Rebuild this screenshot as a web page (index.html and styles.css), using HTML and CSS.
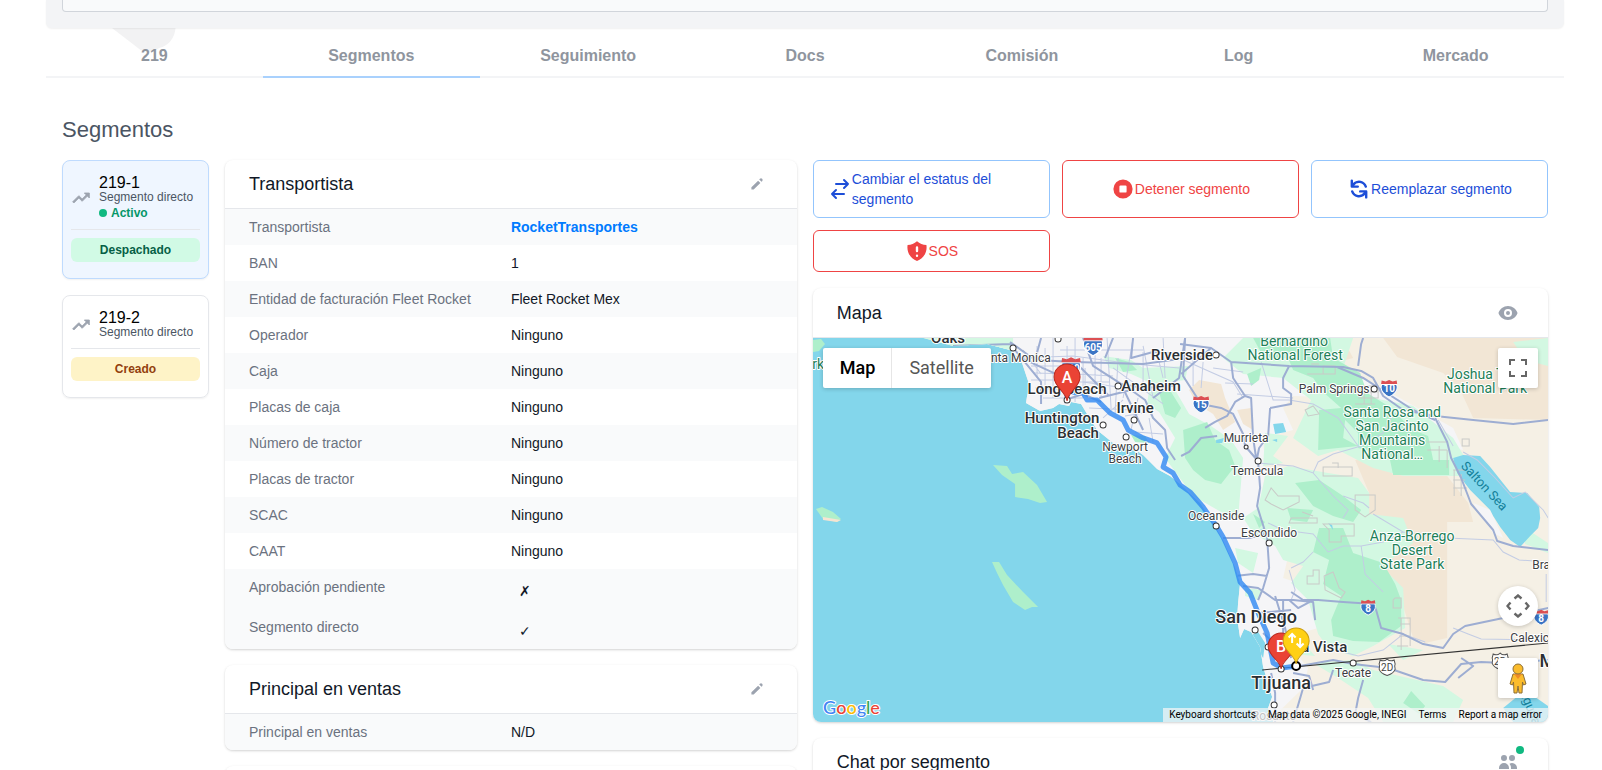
FILE: index.html
```html
<!DOCTYPE html>
<html lang="es">
<head>
<meta charset="utf-8">
<meta name="viewport" content="width=device-width, initial-scale=1">
<title>Segmentos</title>
<link rel="stylesheet" href="styles.css">
</head>
<body>
<div class="page">
  <div class="summary"><div class="summary-inner"></div></div>

  <nav class="tabs" aria-label="Secciones">
    <svg class="tabs-tail" viewBox="0 0 64 25" aria-hidden="true"><path d="M0 0H63.500C63 9 57 18 47 20C41 25 31 25 26 20Z"/></svg>
    <button class="tab" type="button">219</button>
    <button class="tab tab-active" type="button">Segmentos</button>
    <button class="tab" type="button">Seguimiento</button>
    <button class="tab" type="button">Docs</button>
    <button class="tab" type="button">Comisión</button>
    <button class="tab" type="button">Log</button>
    <button class="tab" type="button">Mercado</button>
  </nav>

  <main class="content">
    <h1 class="title">Segmentos</h1>
    <div class="columns">
      <aside class="segments">
        <button class="segment segment-selected" type="button">
          <span class="segment-head">
            <svg class="icon-20 icon-trend" viewBox="0 0 24 24" aria-hidden="true"><path d="M16 6l2.290 2.290-4.880 4.880-4-4L2 16.590 3.410 18l6-6 4 4 6.300-6.290L22 12V6z"/></svg>
            <span class="segment-text">
              <span class="segment-id">219-1</span>
              <span class="segment-kind">Segmento directo</span>
              <span class="segment-live"><span class="dot"></span>Activo</span>
            </span>
          </span>
          <span class="badge badge-green">Despachado</span>
        </button>
        <button class="segment" type="button">
          <span class="segment-head">
            <svg class="icon-20 icon-trend" viewBox="0 0 24 24" aria-hidden="true"><path d="M16 6l2.290 2.290-4.880 4.880-4-4L2 16.590 3.410 18l6-6 4 4 6.300-6.290L22 12V6z"/></svg>
            <span class="segment-text">
              <span class="segment-id">219-2</span>
              <span class="segment-kind">Segmento directo</span>
            </span>
          </span>
          <span class="badge badge-yellow">Creado</span>
        </button>
      </aside>

      <div class="stack">
        <section class="card">
          <header class="card-head">
            <h2>Transportista</h2>
            <button class="icon-button" type="button" aria-label="Editar transportista"><svg class="icon-16" viewBox="0 0 20 20"><path d="M13.586 3.586a2 2 0 112.828 2.828l-.793.793-2.828-2.828.793-.793zM11.379 5.793L3 14.172V17h2.828l8.380-8.379-2.830-2.828z"/></svg></button>
          </header>
          <table class="facts">
            <tr><th scope="row">Transportista</th><td><a href="#">RocketTransportes</a></td></tr>
            <tr><th scope="row">BAN</th><td>1</td></tr>
            <tr><th scope="row">Entidad de facturación Fleet Rocket</th><td>Fleet Rocket Mex</td></tr>
            <tr><th scope="row">Operador</th><td>Ninguno</td></tr>
            <tr><th scope="row">Caja</th><td>Ninguno</td></tr>
            <tr><th scope="row">Placas de caja</th><td>Ninguno</td></tr>
            <tr><th scope="row">Número de tractor</th><td>Ninguno</td></tr>
            <tr><th scope="row">Placas de tractor</th><td>Ninguno</td></tr>
            <tr><th scope="row">SCAC</th><td>Ninguno</td></tr>
            <tr><th scope="row">CAAT</th><td>Ninguno</td></tr>
            <tr><th scope="row">Aprobación pendiente</th><td><span class="mark">✗</span></td></tr>
            <tr class="shaded"><th scope="row">Segmento directo</th><td><span class="mark">✓</span></td></tr>
          </table>
        </section>

        <section class="card">
          <header class="card-head">
            <h2>Principal en ventas</h2>
            <button class="icon-button" type="button" aria-label="Editar principal en ventas"><svg class="icon-16" viewBox="0 0 20 20"><path d="M13.586 3.586a2 2 0 112.828 2.828l-.793.793-2.828-2.828.793-.793zM11.379 5.793L3 14.172V17h2.828l8.380-8.379-2.830-2.828z"/></svg></button>
          </header>
          <table class="facts">
            <tr><th scope="row">Principal en ventas</th><td>N/D</td></tr>
          </table>
        </section>

        <section class="card card-empty"></section>
      </div>

      <div class="stack">
        <div class="actions">
          <button class="action action-blue" type="button">
            <svg class="icon-24 icon-line" viewBox="0 0 24 24" aria-hidden="true"><path d="M8 7h12m0 0l-4-4m4 4l-4 4m0 6H4m0 0l4 4m-4-4l4-4"/></svg>
            <span>Cambiar el estatus del segmento</span>
          </button>
          <button class="action action-red" type="button">
            <svg class="icon-24" viewBox="0 0 20 20" aria-hidden="true"><path fill-rule="evenodd" d="M10 18a8 8 0 100-16 8 8 0 000 16zM8 7a1 1 0 00-1 1v4a1 1 0 001 1h4a1 1 0 001-1V8a1 1 0 00-1-1H8z"/></svg>
            <span>Detener segmento</span>
          </button>
          <button class="action action-blue" type="button">
            <svg class="icon-24" viewBox="0 0 20 20" aria-hidden="true"><path fill-rule="evenodd" d="M4 2a1 1 0 011 1v2.101a7.002 7.002 0 0111.601 2.566 1 1 0 11-1.885.666A5.002 5.002 0 005.999 7H9a1 1 0 010 2H4a1 1 0 01-1-1V3a1 1 0 011-1zm.008 9.057a1 1 0 011.276.610A5.002 5.002 0 0014.001 13H11a1 1 0 110-2h5a1 1 0 011 1v5a1 1 0 11-2 0v-2.101a7.002 7.002 0 01-11.601-2.566 1 1 0 01.610-1.276z"/></svg>
            <span>Reemplazar segmento</span>
          </button>
          <button class="action action-red" type="button">
            <svg class="icon-24" viewBox="0 0 20 20" aria-hidden="true"><path fill-rule="evenodd" d="M10 1.944A11.954 11.954 0 012.166 5C2.056 5.649 2 6.319 2 7c0 5.225 3.340 9.670 8 11.317C14.660 16.670 18 12.225 18 7c0-.682-.057-1.350-.166-2.001A11.954 11.954 0 0110 1.944zM11 14a1 1 0 11-2 0 1 1 0 012 0zm0-7a1 1 0 10-2 0v3a1 1 0 102 0V7z"/></svg>
            <span>SOS</span>
          </button>
        </div>

        <section class="card">
          <header class="card-head card-head-tall">
            <h2>Mapa</h2>
            <button class="icon-button icon-button-wide" type="button" aria-label="Mostrar mapa"><svg class="icon-20" viewBox="0 0 20 20"><path d="M10 12a2 2 0 100-4 2 2 0 000 4z"/><path fill-rule="evenodd" d="M.458 10C1.732 5.943 5.522 3 10 3s8.268 2.943 9.542 7c-1.274 4.057-5.064 7-9.542 7S1.732 14.057.458 10zM14 10a4 4 0 11-8 0 4 4 0 018 0z"/></svg></button>
          </header>
          <div class="map">
            <svg class="map-canvas" viewBox="0 0 735 384" preserveAspectRatio="xMidYMid slice" role="img" aria-label="Ruta de Long Beach a Tijuana">
              <defs>
                <clipPath id="land"><path d="M110 0L140 8L174 6L197 12L208 22L217 49L214 58L213 65L227 73L240 70L246 66L256 68L258 64L268 66L274 76L284 92L300 105L317 108L330 117L344 131L357 138L367 146L387 165L399 183L410 202L422 229L427 245L425 265L424 280L427 300L431 291L438 294L447 309L450 329L455 345L459 359L455 370L460 384H735V0Z"/></clipPath>
                <symbol id="shield" viewBox="0 0 20 20"><path fill="#3a74c4" stroke="#fff" stroke-width="1" d="M2.500 6.500H17.500C19.500 12 16 16 10 19C4 16 .500 12 2.500 6.500Z"/><path fill="#dc4f53" d="M2.500 2.500L6.500 3.500L10 2L13.500 3.500L17.500 2.500L18 6H2Z"/></symbol>
                <symbol id="shield-mx" viewBox="0 0 20 20"><path fill="#fff" stroke="#555" d="M3 3Q7 5 10 2Q13 5 17 3L18 7Q17 9 18 12Q17 16 10 18.500Q3 16 2 12Q3 9 2 7Z"/></symbol>
              </defs>
              <rect class="water" width="735" height="384"/>
              <g class="green">
                <path d="M0 2L8 1L12 6L6 13L0 14Z"/>
                <path d="M180 127L194 128L199 136L210 134L224 147L234 164L227 165L215 161L202 159V146L189 137Z"/>
                <path d="M3 171L9 169L20 174L28 181L24 184L10 181Z"/>
                <path d="M179 224H186L194 237L210 254L225 269H219L212 272L200 264L190 247L184 235Z"/>
              </g>
              <path class="sand" d="M10 179L28 182L24 184L10 182Z"/>

              <g clip-path="url(#land)">
                <rect class="ground" width="735" height="384"/>
                <g class="urban">
                  <path d="M150 0H440L455 20L520 26L560 45L640 90L650 112L625 108L580 78L545 60L480 58L470 70L480 92L450 100L452 130L448 170L460 190L478 205L470 240L500 250L505 290L470 300L495 330L490 350L455 384H400L200 100Z"/>
                  <path d="M578 158L610 155V184L592 192L580 184ZM660 165L677 172L690 200L680 195ZM562 250L580 262L577 280L565 275Z"/>
                </g>
                <g class="desert">
                  <path d="M570 0L584 19L630 35L647 52L660 80L735 82V0Z"/>
                  <path d="M542 122L567 118L580 137L634 138L655 165L660 184H634V255L634 300L612 305L600 300L588 262L574 255L565 235L556 205V155Z"/>
                  <path d="M498 80H508L510 100H500ZM517 8L532 5L540 20L525 24ZM376 52L386 42L408 46L412 60L422 84L410 92L400 76L384 66ZM424 72L438 70L440 92L430 86Z"/>
                </g>
                <g class="mint">
                  <path d="M110 0H200V12L140 9ZM290 18L318 22L330 30L375 28L372 42L340 46L318 36L296 30ZM336 52H362L376 76L398 88L418 102L430 120L425 180L408 174L380 158L352 120L362 100L346 74L334 66Z"/>
                  <path d="M410 20L430 0H540L530 30L560 60L600 68L640 100L655 125L665 138H590L560 130L525 112L505 118L480 100L498 62L470 40L430 36ZM700 4L735 0V28L712 22Z"/>
                  <path d="M452 138L475 128L515 135L545 140L556 155V176L590 180L600 205L585 215L570 230L590 250L592 290L560 308L540 318L515 310L505 296L495 262L478 245L490 228L470 222L462 208L440 195L430 180L445 170Z"/>
                  <path d="M452 95L475 98L460 118L470 125L450 128ZM422 210L445 215L440 235L425 225ZM500 325L540 322L560 332L630 348L650 362L640 384H570L555 360L525 340ZM575 306L610 312L590 322ZM700 160L712 190L735 205V215L712 206ZM432 250L450 252L445 262L432 258ZM486 300L502 318L480 316Z"/>
                </g>
                <g class="green">
                  <path d="M302 20L316 24L324 32L310 34ZM434 36L448 30L446 42L438 48ZM318 97L332 98L336 105L322 104Z"/>
                  <path d="M440 0H517L520 20L547 35L554 55L575 68L600 92L615 98L620 122H636V137H580L576 118L545 110V95L532 82L530 100L545 108L505 112L506 72L528 70L510 54L500 40L480 32L475 20L452 22Z"/>
                  <path d="M346 54L358 54L368 70L362 80L352 76ZM370 92L394 84L402 102L416 112L422 128L408 146L392 142L380 132L372 120Z"/>
                  <path d="M482 145L506 142L530 158L548 172L540 184L520 178L500 168ZM474 170L500 172L494 184L478 182Z"/>
                  <path d="M506 190H530L540 215L570 225L582 246L588 262V288L566 304L540 303L520 298L518 282L528 258L510 246L516 222L500 214Z"/>
                  <path d="M590 365L598 353L612 368L606 376ZM440 176L452 184L446 190Z"/>
                </g>
                <g class="water">
                  <path d="M640 120L650 117L667 118L677 129L697 154L714 155L726 169L727 180L725 190L717 198L707 209L697 202L687 189L680 178L677 172L657 152L644 135Z"/>
                  <path d="M388 62L395 60V67L388 66ZM403 102L411 100L409 105L403 105ZM460 86L470 85L473 94L462 96ZM459 102L464 101V104ZM447 192L451 190V196ZM515 185L519 187L520 192ZM436 298L445 294L452 305L450 320Z"/>
                  <path d="M690 370L712 352L735 368V384H700Z"/>
                </g>
                <g class="lots">
                  <path d="M494 36H510V28H522V36H510M498 26H506M545 48H565V60H545M545 54H565M551 48V66M558 48V66M542 66H562M510 129H539V138H510ZM519 125H525V130M542 157H562V172L552 179L542 172ZM452 162L458 150L465 158H486V164L470 172L458 166ZM478 180H504V185H476ZM489 174L500 178M510 186H541V198H528V204H516V192ZM494 238H500V232H506V246H494ZM511 238L520 234L526 250L532 254L528 260L512 252ZM614 104H634M614 112H634M626 108V124M634 112V130M640 132H652M640 142H652M640 150H654M641 132V158M648 136V158M649 101H656V108H649ZM582 260H588V270H580V262ZM587 286H597V280H585M586 298H597M584 308H595M588 280V312M597 280V308M492 72L500 68L506 76L495 78Z"/>
                </g>
                <g class="minor-roads">
                  <path d="M205 20L260 18L320 26L366 30M220 35L262 36L300 38M222 50L255 52M230 60L270 60M240 0V60M262 0V64M282 0V55M294 0L298 70M320 0L310 60M210 12L228 36M300 30L350 66M325 60L318 92M290 80L310 62M218 42H250M224 8V40M254 8V56M272 30V58M288 20V60M270 44L312 50M276 70L320 72M305 20L302 76M312 78L336 74M336 80L340 104M322 94L350 96M330 14V46M344 16L350 40M380 20V48M390 24L388 50M400 30L430 34"/>
                  <path d="M232 10V50M247 12H330M252 25V66M270 20V60M248 44H296M218 28H250M330 8L340 60M350 0L352 40M366 20L420 44L430 60M412 45L440 46M424 56L480 60M448 24L460 62L476 62M476 62L500 66L525 80L545 108M445 125L480 128L500 135L505 124L520 116L548 108L570 95L578 80M500 135L520 158L535 172L530 180M530 158L550 165L556 170M455 185L470 192L500 196L515 214L530 208L548 208M548 208L570 204L590 194L560 176M478 230L490 224L500 214M476 232L482 252L478 262M548 208L552 236L570 254M515 310L545 318L570 312L590 296L612 304M590 194L634 200L680 202L690 214L706 222L735 224M625 82L640 108M650 114L664 122L682 140L700 160L712 154L730 172L735 180M640 290L655 296L668 301L735 302M733 236V264"/>
                </g>
                <g class="roads">
                  <path d="M140 8L197 6L210 22L228 44V66M197 4L222 22L262 24L330 26L366 21M208 20L260 44M262 24L296 58M228 0L222 22M300 0L292 20M320 0L318 20L340 14L366 16M270 0L280 28L308 46L330 50L360 48M286 60L318 52L332 62L340 80L352 92L354 110L362 122M308 46L330 92M252 62L270 56L288 64M340 60L366 40L372 0"/>
                  <path d="M367 6L398 10L418 24L476 28L530 29L548 33L560 40L570 58L590 72L622 78L660 82L700 86L735 82M398 10L368 36M372 0L370 38L388 66L408 70L420 76L430 96L432 108L444 122M418 24L420 40L432 58L438 60L440 100L443 120M432 58L422 64L414 78L402 84L392 90M404 98L388 100L376 114L368 118M457 70L455 98L446 110L444 120M457 70L478 66V56L470 50V40L476 28M545 28L548 6L550 0M524 29L550 40L600 72L622 82M622 80L634 104L638 120L648 140L658 166L680 192L684 203L700 208L735 212"/>
                  <path d="M445 124L447 150L444 168L454 200L456 230L450 250L445 262M410 200L436 200L452 196M422 238L440 236L454 238M430 248L445 250L462 262L480 262L500 264L502 282M478 254L490 262L505 262L530 264L560 266L563 272L568 290L590 296L610 306L630 310L640 296L652 288L690 280L735 270M500 262L485 270L476 262M470 262V310M445 275L478 272M462 258L472 290L478 320M450 295L468 312L484 310M487 328L520 322L540 326L575 330L610 342L632 344L648 326L668 324L690 325L735 322M520 332L516 344L490 350L480 384M550 342L545 360L542 376L558 384M458 335L462 355V384M480 335L496 338L500 352M648 320L660 328L645 340"/>
                </g>
              </g>

              <path class="frontier" d="M449 332L735 305"/>
              <path class="route" d="M254 62V54L270 55L274 62H284L297 75L310 82L315 92L330 100L344 105L353 119L350 129L360 135L367 147L377 154L390 169L404 189L410 199L422 225L427 244L437 255L445 275L454 295L458 315L460 325L469 330L483 328"/>

              <use href="#shield" x="268" y="-5" width="24" height="24"/><use href="#shield" x="246" y="17" width="24" height="24"/><use href="#shield" x="378" y="56" width="20" height="20"/><use href="#shield" x="566" y="40" width="20" height="20"/><use href="#shield" x="546" y="260" width="18" height="18"/><use href="#shield" x="719" y="270" width="18" height="18"/>
              <use href="#shield-mx" x="564" y="319" width="20" height="20"/><use href="#shield-mx" x="677" y="313" width="20" height="20"/>
              <g class="shield-text"><text x="280" y="13">605</text><text x="258" y="34">710</text><text x="388" y="70">15</text><text x="576" y="54">10</text><text x="555" y="274">8</text><text x="728" y="284">8</text></g>
              <g class="shield-mx-text"><text x="574" y="333">2D</text><text x="687" y="327">2D</text></g>

              <g class="town-dot">
                <circle cx="200" cy="10" r="3"/><circle cx="245" cy="1" r="3"/><circle cx="254" cy="62" r="3"/><circle cx="305" cy="48" r="3"/><circle cx="321" cy="82" r="3"/><circle cx="290" cy="87" r="3"/><circle cx="313" cy="99" r="3"/><circle cx="403" cy="17" r="3"/><circle cx="561" cy="51" r="3"/><circle cx="433" cy="109" r="2"/><circle cx="445" cy="123" r="3"/><circle cx="403" cy="188" r="3"/><circle cx="456" cy="205" r="3"/><circle cx="442" cy="292" r="3"/><circle cx="455" cy="309" r="3"/><circle cx="540" cy="325" r="3"/><circle cx="461" cy="367" r="3"/><circle cx="468" cy="331" r="3"/>
              </g>

              <g class="city">
                <text x="135" y="5">Oaks</text><text x="369" y="22">Riverside</text><text x="338" y="53">Anaheim</text><text x="322" y="75">Irvine</text><text x="254" y="56">Long Beach</text><text x="249" y="85">Huntington</text><text x="265" y="100">Beach</text><text x="496" y="314">Chula Vista</text>
              </g>
              <g class="city city-large"><text x="443" y="285">San Diego</text><text x="468" y="351">Tijuana</text><text x="760" y="329">Mexicali</text></g>
              <g class="town">
                <text x="201" y="24">Santa Monica</text><text x="312" y="113">Newport</text><text x="312" y="125">Beach</text><text x="521" y="55">Palm Springs</text><text x="433" y="104">Murrieta</text><text x="444" y="137">Temecula</text><text x="403" y="182">Oceanside</text><text x="456" y="199">Escondido</text><text x="740" y="231">Brawley</text><text x="720" y="304">Calexico</text><text x="540" y="339">Tecate</text><text x="461" y="382">Rosarito</text>
              </g>
              <g class="park">
                <text x="-3" y="31">Park</text><text x="481" y="8">Bernardino</text><text x="482" y="22">National Forest</text><text x="672" y="41">Joshua Tree</text><text x="672" y="55">National Park</text><text x="579" y="79">Santa Rosa and</text><text x="579" y="93">San Jacinto</text><text x="579" y="107">Mountains</text><text x="579" y="121">National…</text><text x="599" y="203">Anza-Borrego</text><text x="599" y="217">Desert</text><text x="599" y="231">State Park</text>
              </g>
              <text class="lake" transform="translate(668 151) rotate(47)">Salton Sea</text>
              <text class="lake" transform="translate(712 368) rotate(68)">Laguna</text>

              <g class="pin pin-red"><path d="M254 63C253 54 241 49 241 39A13 13 0 01267 39C267 49 255 54 254 63Z"/><text x="254" y="45">A</text></g>
              <g class="pin pin-red"><path d="M468 331C467 322 455 318 455 308A13 13 0 01481 308C481 318 469 322 468 331Z"/><text x="468" y="314">B</text></g>
              <circle class="stop" cx="483" cy="328" r="4"/>
              <g class="pin pin-yellow"><path d="M483 326C482 317 470 313 470 303A13 13 0 01496 303C496 313 484 317 483 326Z"/><path class="pin-arrows" d="M479 305V296M475.500 299.500L479 296L482.500 299.500M487 300V309M483.500 305.500L487 309L490.500 305.500"/></g>

              <text class="wordmark" x="10" y="376"><tspan fill="#4285f4">G</tspan><tspan fill="#ea4335">o</tspan><tspan fill="#fbbc04">o</tspan><tspan fill="#4285f4">g</tspan><tspan fill="#34a853">l</tspan><tspan fill="#ea4335">e</tspan></text>
            </svg>

            <div class="map-types">
              <button class="map-type map-type-on" type="button">Map</button>
              <button class="map-type" type="button">Satellite</button>
            </div>
            <button class="map-control map-full" type="button" aria-label="Toggle fullscreen view"><svg viewBox="0 0 18 18"><path d="M0 0v6h2V2h4V0H0zm16 0h-4v2h4v4h2V0h-2zm0 16h-4v2h6v-6h-2v4zM2 12H0v6h6v-2H2v-4z"/></svg></button>
            <div class="map-controls">
              <button class="map-control map-round" type="button" aria-label="Map camera controls"><svg class="icon-24" viewBox="0 0 24 24"><path fill="none" stroke="#666" stroke-width="2.400" d="M8.500 4.500L12 1.500L15.500 4.500M8.500 19.500L12 22.500L15.500 19.500M4.500 8.500L1.500 12L4.500 15.500M19.500 8.500L22.500 12L19.500 15.500"/></svg></button>
              <button class="map-control" type="button" aria-label="Street View"><svg class="pegman" viewBox="0 0 18 31"><path fill="#fbbc2c" stroke="#8c6f37" d="M4 11H14L17 21L14.500 22L13.500 19L13 30H10L9 23L8 30H5L4.500 19L3.500 22L1 21Z"/><path fill="#ee8b27" d="M5 11H13L9 16Z"/><circle cx="9" cy="6" r="5" fill="#fbbc2c" stroke="#8c6f37"/></svg></button>
            </div>
            <div class="map-legal">
              <button type="button">Keyboard shortcuts</button>
              <span>Map data ©2025 Google, INEGI</span>
              <a href="#">Terms</a>
              <a href="#">Report a map error</a>
            </div>
          </div>
        </section>

        <section class="card">
          <header class="card-head">
            <h2>Chat por segmento</h2>
            <button class="icon-button icon-button-wide" type="button" aria-label="Participantes"><svg class="icon-20" viewBox="0 0 20 20"><path d="M9 6a3 3 0 11-6 0 3 3 0 016 0zM17 6a3 3 0 11-6 0 3 3 0 016 0zM12.930 17c.046-.327.070-.660.070-1a6.970 6.970 0 00-1.500-4.330A5 5 0 0119 16v1h-6.070zM6 11a5 5 0 015 5v1H1v-1a5 5 0 015-5z"/></svg><span class="dot online"></span></button>
          </header>
        </section>
      </div>
    </div>
  </main>
</div>
</body>
</html>
```

FILE: styles.css
```css
* { box-sizing: border-box; }

html { overflow: hidden; }

body {
  margin: 0;
  background: #fff;
  color: #111827;
  font-family: "Liberation Sans", Arial, sans-serif;
  font-size: 14px;
  line-height: 20px;
}

button {
  margin: 0;
  padding: 0;
  border: 0;
  background: none;
  color: inherit;
  font: inherit;
  cursor: pointer;
}

a { color: inherit; text-decoration: none; }

svg { flex: none; fill: currentColor; }

.page { padding: 0 38px 0 46px; }

.icon-16 { width: 16px; height: 16px; }
.icon-20 { width: 20px; height: 20px; }
.icon-24 { width: 24px; height: 24px; }

.icon-trend { stroke: currentColor; stroke-width: 1; }

.icon-line {
  fill: none;
  stroke: currentColor;
  stroke-width: 2;
  stroke-linecap: round;
  stroke-linejoin: round;
}

.summary {
  position: relative;
  z-index: 1;
  padding: 0 16px 16px;
  border-radius: 0 0 6px 6px;
  background: #f3f4f6;
  box-shadow: 0 1px 2px rgba(0, 0, 0, 0.06);
}

.summary-inner {
  height: 12px;
  border: 1px solid #d1d5db;
  border-top: 0;
  border-radius: 0 0 4px 4px;
  background: #f9fafb;
}

.tabs {
  position: relative;
  display: grid;
  grid-template-columns: repeat(7, 1fr);
}

.tabs-tail {
  position: absolute;
  top: 0;
  left: 66px;
  width: 64px;
  height: 25px;
  fill: #f2f2f3;
}

.tab {
  position: relative;
  padding: 18px 0 10px;
  border-bottom: 2px solid #f3f4f6;
  color: #8f959e;
  font-size: 16px;
  font-weight: 700;
}

.tab-active { border-color: #a9d1fd; }

.content { padding: 38px 16px 0; }

.title {
  margin: 0 0 16px;
  color: #4b5563;
  font-size: 22px;
  font-weight: 400;
  line-height: 28px;
}

.columns {
  display: grid;
  grid-template-columns: 147px 7fr 9fr;
  gap: 16px;
  align-items: start;
}

.segments, .stack {
  display: flex;
  flex-direction: column;
  gap: 16px;
  min-width: 0;
}

.segment {
  padding: 14px 8px 16px;
  border: 1px solid #e5e7eb;
  border-radius: 8px;
  box-shadow: 0 1px 2px rgba(0, 0, 0, 0.06);
  text-align: left;
}

.segment-selected { border-color: #bfdbfe; background: #eff6ff; }

.segment-head {
  display: flex;
  align-items: center;
  gap: 8px;
  padding-bottom: 8px;
  border-bottom: 1px solid #e5e7eb;
  color: #9ca3af;
}

.segment-text { display: flex; flex-direction: column; font-size: 12px; white-space: nowrap; }
.segment-id { color: #000; font-size: 16px; line-height: 16px; }
.segment-kind { margin-bottom: 2px; color: #4b5563; line-height: 12px; }

.segment-live {
  display: flex;
  align-items: center;
  gap: 4px;
  color: #059669;
  font-weight: 700;
  line-height: 16px;
}

.dot { width: 8px; height: 8px; border-radius: 50%; background: #10b981; }

.badge {
  display: block;
  margin-top: 8px;
  border-radius: 6px;
  font-size: 12px;
  font-weight: 700;
  line-height: 24px;
  text-align: center;
}

.badge-green { background: #d1fae5; color: #065f46; }
.badge-yellow { background: #fef3c7; color: #92400e; }

.card {
  overflow: hidden;
  border-radius: 8px;
  background: #fff;
  box-shadow: 0 1px 3px rgba(0, 0, 0, 0.12), 0 1px 2px rgba(0, 0, 0, 0.06);
}

.card-empty { min-height: 48px; }

.card-head {
  display: flex;
  align-items: center;
  justify-content: space-between;
  min-height: 49px;
  padding: 0 24px;
  border-bottom: 1px solid #e5e7eb;
}

.card-head-tall { min-height: 50px; }

.card-head h2 { margin: 0; font-size: 18px; font-weight: 400; line-height: 24px; }

.icon-button { position: relative; display: flex; padding: 8px; color: #9ca3af; }
.icon-button-wide { padding: 6px; }
.online { position: absolute; top: 0; right: 0; }

.facts {
  width: 100%;
  border-collapse: collapse;
  table-layout: fixed;
}

.facts tr:nth-child(odd), .facts .shaded { background: #f9fafb; }

.facts th, .facts td { padding: 8px 0; text-align: left; vertical-align: top; }

.facts th {
  width: 50%;
  padding-left: 24px;
  color: #6b7280;
  font-weight: 400;
}

.facts a { color: #007bff; font-weight: 700; }
.mark { display: block; padding: 4px 8px 0; }

.actions {
  display: grid;
  grid-template-columns: repeat(3, 1fr);
  gap: 12px;
}

.action {
  display: flex;
  align-items: center;
  justify-content: center;
  padding: 8px 14px;
  border: 1px solid;
  border-radius: 6px;
  text-align: left;
}

.action-blue { border-color: #93c5fd; color: #1d4ed8; }
.action-red { border-color: #ef4444; color: #ef4444; }

.map {
  position: relative;
  height: 384px;
  font-family: Roboto, "Liberation Sans", sans-serif;
}

.map-canvas { display: block; width: 100%; height: 100%; }

.water { fill: #83d6eb; }
.ground { fill: #f5f0e5; }
.urban { fill: #f5f5f7; }
.desert { fill: #f2e6d5; }
.sand { fill: #f6e4d2; }
.mint { fill: #d3f8e2; }
.green { fill: #aeefcb; }
.lots { fill: none; stroke: #c9cac8; }
.minor-roads { fill: none; stroke: #c3cce4; }
.roads { fill: none; stroke: #9dadd2; stroke-width: 2; stroke-linejoin: round; }
.frontier { fill: none; stroke: #333; stroke-width: 1; }

.route {
  fill: none;
  stroke: #2f88f2;
  stroke-width: 5;
  stroke-linecap: round;
  stroke-linejoin: round;
  opacity: 0.8;
}

.town-dot { fill: #fff; stroke: #333; stroke-width: 1; }
.stop { fill: #fff; stroke: #000; stroke-width: 2; }

.map-canvas text { text-anchor: middle; paint-order: stroke; stroke-linejoin: round; }
.shield-text { fill: #fff; font-size: 10px; font-weight: 700; }
.shield-mx-text { fill: #444; font-size: 10px; }

.city { fill: #2b2f33; stroke: #fff; stroke-width: 2; font-size: 15px; font-weight: 500; }
.city-large { font-size: 18px; }
.town { fill: #3c4043; stroke: #fff; stroke-width: 2; font-size: 12px; }
.park { fill: #1d8058; stroke: #fff; stroke-width: 2; font-size: 14px; }
.lake { fill: #12809a; font-size: 13px; }

.pin text { fill: #fff; font-size: 16px; font-weight: 500; }
.pin-red path { fill: #ea4335; stroke: #b9281c; }
.pin-yellow path { fill: #ffd014; stroke: #c99c12; }
.pin-yellow .pin-arrows { fill: none; stroke: #fff; stroke-width: 2; }

.map-canvas .wordmark {
  stroke: #fff;
  stroke-width: 2;
  font-family: Lato, sans-serif;
  font-size: 18px;
  font-weight: 500;
  text-anchor: start;
}

.map-types {
  position: absolute;
  top: 10px;
  left: 10px;
  display: flex;
  background: #fff;
  border-radius: 2px;
  box-shadow: 0 1px 4px rgba(0, 0, 0, 0.2);
}

.map-type {
  padding: 0 17px;
  color: #565656;
  font-size: 18px;
  line-height: 40px;
}

.map-type + .map-type { border-left: 1px solid #e6e6e6; }
.map-type-on { padding-right: 16px; color: #000; font-weight: 500; }

.map-control {
  display: flex;
  align-items: center;
  justify-content: center;
  width: 40px;
  height: 40px;
  border-radius: 2px;
  background: #fff;
  box-shadow: 0 1px 4px rgba(0, 0, 0, 0.2);
  color: #666;
}

.map-full { position: absolute; top: 10px; right: 10px; }
.map-full svg { width: 18px; height: 18px; }

.map-controls {
  position: absolute;
  right: 10px;
  bottom: 24px;
  display: grid;
  gap: 32px;
}

.map-round { border-radius: 50%; }
.pegman { width: 18px; height: 31px; }

.map-legal {
  position: absolute;
  right: 0;
  bottom: 0;
  display: flex;
  color: #000;
  font-size: 10px;
  line-height: 14px;
  white-space: nowrap;
}

.map-legal > * { padding: 0 6px; background: rgba(245, 245, 245, 0.72); }
```
